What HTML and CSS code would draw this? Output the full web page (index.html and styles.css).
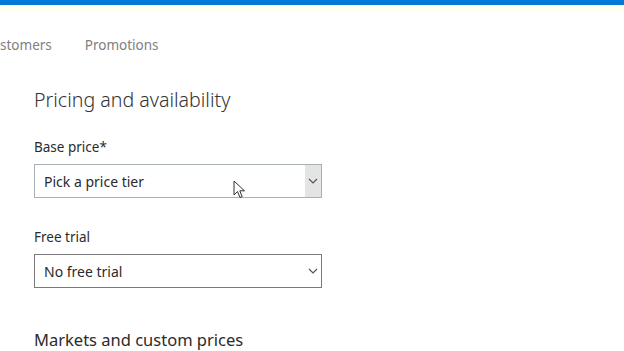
FILE: index.html
```html
<!DOCTYPE html>
<html lang="en">
<head>
    <meta charset="UTF-8">
    <meta name="viewport" content="width=device-width, initial-scale=1.0">
    <title>Pricing and availability</title>
    <link rel="stylesheet" href="styles.css">
</head>
<body>
    <div class="topbar"></div>
    <div class="glow"></div>
    <nav class="tabs">
        <a class="tab">stomers</a>
        <a class="tab">Promotions</a>
    </nav>
    <div class="content">
        <h1>Pricing and availability</h1>
        <div class="form-group">
            <label>Base price*</label>
            <div class="select hover">
                <span class="value">Pick a price tier</span>
                <span class="arrow">
                    <svg width="10" height="6" viewBox="0 0 10 6"><path d="M1 1 L5 5 L9 1" fill="none" stroke="#555" stroke-width="1.2"/></svg>
                </span>
                <svg class="cursor" width="14" height="20" viewBox="0 0 14 20">
                    <path d="M1 1 L1 15 L4.5 11.5 L7 17.5 L9.2 16.6 L6.8 10.8 L11.5 10.8 Z" fill="#fff" stroke="#333" stroke-width="1"/>
                </svg>
            </div>
        </div>
        <div class="form-group">
            <label>Free trial</label>
            <div class="select">
                <span class="value">No free trial</span>
                <span class="arrow">
                    <svg width="10" height="6" viewBox="0 0 10 6"><path d="M1 1 L5 5 L9 1" fill="none" stroke="#555" stroke-width="1.2"/></svg>
                </span>
            </div>
        </div>
        <h2>Markets and custom prices</h2>
    </div>
</body>
</html>
```

FILE: styles.css
```css
body {
    margin: 0;
    font-family: "Noto Sans", "Open Sans", sans-serif;
    background-color: white;
    color: #2b2b2b;
    overflow: hidden;
}
.topbar {
    height: 5px;
    background-color: #0078d7;
}
.glow {
    height: 6px;
    background-color: #fffef4;
}
.tabs {
    display: flex;
    gap: 33px;
    height: 68px;
    align-items: center;
}
.tab {
    font-size: 13.5px;
    color: #808080;
}
.content {
    padding-left: 34px;
}
h1 {
    font-size: 19.6px;
    font-weight: 300;
    color: #333;
    line-height: 30px;
    margin: 6px 0 22px 0;
}
.form-group {
    margin-bottom: 29px;
}
label {
    display: block;
    font-size: 13.5px;
    line-height: 20px;
    margin-bottom: 7px;
    color: #2b2b2b;
}
.select {
    position: relative;
    width: 286px;
    height: 32px;
    border: 1px solid #7a7a7a;
    display: flex;
    align-items: center;
    justify-content: space-between;
}
.select.hover {
    border-color: #a6b0b5;
}
.value {
    font-size: 14px;
    padding-left: 9px;
}
.arrow {
    width: 16px;
    height: 100%;
    display: flex;
    align-items: center;
    justify-content: center;
}
.select.hover .arrow {
    background-color: #e4e4e4;
}
.cursor {
    position: absolute;
    left: 198px;
    top: 15px;
}
h2 {
    font-size: 16.5px;
    font-weight: 400;
    line-height: 22px;
    margin: 0;
    padding-top: 12px;
    color: #2b2b2b;
}
```
